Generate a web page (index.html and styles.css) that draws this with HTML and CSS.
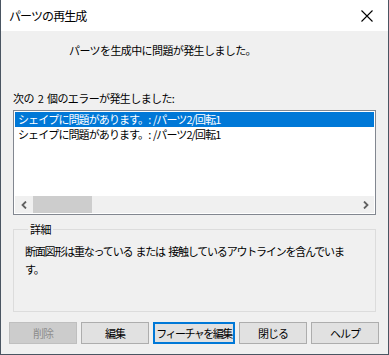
FILE: index.html
```html
<!DOCTYPE html>
<html lang="ja">
<head>
    <meta charset="UTF-8">
    <meta name="viewport" content="width=device-width, initial-scale=1.0">
    <title>パーツの再生成</title>
    <link rel="stylesheet" href="styles.css">
</head>
<body>
    <div class="dialog">
        <div class="title-bar">
            <span class="title">パーツの再生成</span>
            <span class="close">
                <svg width="12" height="12" viewBox="0 0 12 12"><path d="M0.5 0.5L11.5 11.5M11.5 0.5L0.5 11.5" stroke="#000" stroke-width="1.1" fill="none"/></svg>
            </span>
        </div>
        <div class="content">
            <p class="message">パーツを生成中に問題が発生しました。</p>
            <p class="count">次の 2 個のエラーが発生しました:</p>
            <div class="list-box">
                <ul class="list">
                    <li class="active">シェイプに問題があります。: /パーツ2/回転1</li>
                    <li>シェイプに問題があります。: /パーツ2/回転1</li>
                </ul>
                <div class="hscroll">
                    <span class="arrow">
                        <svg width="8" height="8" viewBox="0 0 8 8"><path d="M6 0.5L2.5 4L6 7.5" stroke="#606060" stroke-width="1.8" fill="none"/></svg>
                    </span>
                    <div class="track"><div class="thumb"></div></div>
                    <span class="arrow">
                        <svg width="8" height="8" viewBox="0 0 8 8"><path d="M2 0.5L5.5 4L2 7.5" stroke="#606060" stroke-width="1.8" fill="none"/></svg>
                    </span>
                </div>
            </div>
            <fieldset class="details">
                <legend>詳細</legend>
                <p>断面図形は重なっている または 接触しているアウトラインを含んでいま</p>
                <p>す。</p>
            </fieldset>
            <div class="buttons">
                <button class="btn" disabled>削除</button>
                <button class="btn">編集</button>
                <button class="btn wide default">フィーチャを編集</button>
                <button class="btn">閉じる</button>
                <button class="btn">ヘルプ</button>
            </div>
        </div>
    </div>
</body>
</html>
```

FILE: styles.css
```css
*{
    padding: 0;
    margin: 0;
    box-sizing: border-box;
}
li{
    list-style: none;
}
body{
    background-color: #f0f0f0;
    font-family: "Noto Sans CJK JP", "Noto Sans", sans-serif;
    font-size: 11px;
    letter-spacing: -0.6px;
    word-spacing: 2px;
    color: #000;
}
.dialog{
    width: 389px;
    height: 355px;
    border: 1px solid #4a5562;
    border-top: none;
    background-color: #f0f0f0;
    display: flex;
    flex-direction: column;
}
.title-bar{
    height: 31px;
    background-color: #fff;
    display: flex;
    align-items: center;
    justify-content: space-between;
    padding: 0 15px 0 8px;
}
.title{
    font-size: 12px;
    letter-spacing: -0.9px;
}
.close{
    display: flex;
}
.content{
    flex: 1;
    padding: 0 12px 0 12px;
    display: flex;
    flex-direction: column;
}
.message{
    margin: 11px 0 0 56px;
    line-height: 16px;
}
.count{
    margin-top: 32px;
    line-height: 16px;
}
.list-box{
    margin-top: 4px;
    height: 105px;
    flex-shrink: 0;
    border: 1px solid #828790;
    background-color: #fff;
    display: flex;
    flex-direction: column;
}
.list{
    flex: 1;
    padding: 1px 1px 0;
}
.list li{
    height: 15px;
    line-height: 15px;
    padding-left: 3px;
    letter-spacing: -0.9px;
    word-spacing: 1px;
    white-space: nowrap;
}
.list .active{
    background-color: #0078d7;
    color: #fff;
}
.hscroll{
    height: 17px;
    margin: 0 1px 1px;
    background-color: #f0f0f0;
    display: flex;
    align-items: center;
}
.arrow{
    width: 17px;
    display: flex;
    justify-content: center;
}
.track{
    flex: 1;
    height: 17px;
}
.thumb{
    width: 59px;
    height: 17px;
    margin-left: 1px;
    background-color: #cdcdcd;
}
.details{
    margin-top: 7px;
    height: 90px;
    flex-shrink: 0;
    border: 1px solid #dcdcdc;
    padding: 6px 11px 0;
}
.details legend{
    margin-left: 3px;
    padding: 0 2px;
    line-height: 14px;
}
.details p{
    line-height: 18px;
    letter-spacing: -1.2px;
    white-space: nowrap;
}
.buttons{
    margin: 10px -8px 0 -4px;
    display: flex;
    gap: 4px;
}
.btn{
    width: 68px;
    height: 22px;
    padding: 0;
    border: 1px solid #adadad;
    background-color: #e1e1e1;
    font-family: inherit;
    font-size: 11px;
    letter-spacing: -1px;
    white-space: nowrap;
    color: #000;
}
.btn.wide{
    width: 82px;
    letter-spacing: -1.5px;
}
.btn.default{
    border: 2px solid #0078d7;
}
.btn:disabled{
    background-color: #cccccc;
    border-color: #bfbfbf;
    color: #8d8d8d;
}
```
